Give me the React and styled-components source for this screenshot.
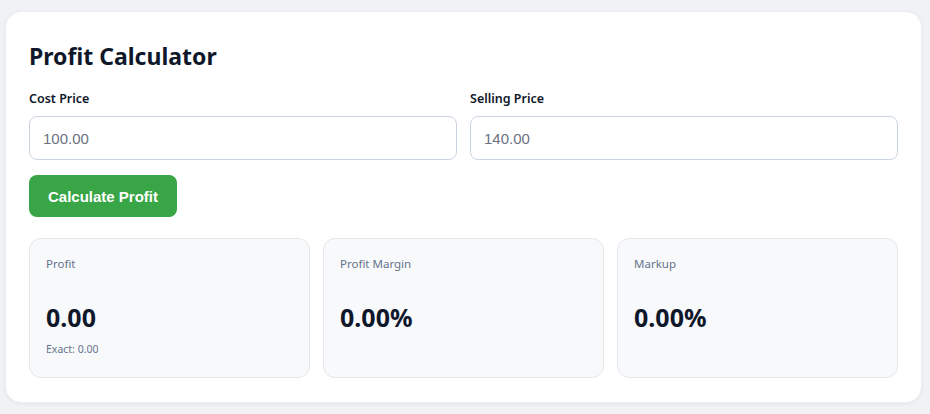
import { useState } from 'react';
import styled, { createGlobalStyle } from 'styled-components';

const GlobalStyle = createGlobalStyle`
  html, body {
    margin: 0;
    padding: 0;
    background-color: #f1f2f6;
  }
  body {
    font-family: "Noto Sans", "Segoe UI", sans-serif;
    color: #0f172a;
  }
`

const Page = styled.div`
  padding: 11px 8px 12px 5px;
`

const Card = styled.div`
  background-color: #fff;
  border-radius: 16px;
  padding: 27px 23px 24px 23px;
  box-shadow: 0 1px 4px rgba(15, 23, 42, 0.06);
  border: 1px solid #eceef2;
`

const Title = styled.h1`
  margin: 0 0 17px;
  font-size: 23px;
  font-weight: 700;
  line-height: 34px;
  color: #0f172a;
`

const FieldRow = styled.div`
  display: grid;
  grid-template-columns: 1fr 1fr;
  gap: 13px;
  margin-bottom: 15px;
`

const Field = styled.div`
  display: flex;
  flex-flow: column nowrap;
`

const Label = styled.label`
  font-size: 12.5px;
  font-weight: 600;
  line-height: 18px;
  margin-bottom: 8px;
  color: #0f172a;
`

const PriceInput = styled.input`
  box-sizing: border-box;
  height: 44px;
  padding: 0 13px;
  border: 1px solid #cbd5e1;
  border-radius: 8px;
  font-family: "Liberation Sans", Arial, sans-serif;
  font-size: 15px;
  color: #6b7280;
  background: #fff;
  outline: none;
`

const CalcBtn = styled.button`
  height: 42px;
  padding: 0 19px;
  border: none;
  border-radius: 8px;
  background-color: #38a546;
  color: #fff;
  font-family: "Liberation Sans", Arial, sans-serif;
  font-size: 15px;
  font-weight: 700;
  cursor: pointer;
`

const Results = styled.div`
  display: grid;
  grid-template-columns: repeat(3, 1fr);
  gap: 13px;
  margin-top: 21px;
`

const ResultCard = styled.div`
  box-sizing: border-box;
  height: 140px;
  padding: 17px 16px;
  background-color: #f8f9fb;
  border: 1px solid #e5e7eb;
  border-radius: 12px;
`

const ResultLabel = styled.div`
  font-size: 11.5px;
  line-height: 16px;
  color: #64748b;
  margin-bottom: 28px;
`

const ResultValue = styled.div`
  font-size: 25px;
  font-weight: 700;
  line-height: 34px;
  color: #0f172a;
`

const Exact = styled.div`
  font-size: 10.5px;
  line-height: 14px;
  color: #64748b;
  margin-top: 8px;
`

const App = () => {
  const [cost, setCost] = useState('100.00');
  const [selling, setSelling] = useState('140.00');

  return (
    <Page>
      <GlobalStyle />
      <Card>
        <Title>Profit Calculator</Title>
        <FieldRow>
          <Field>
            <Label htmlFor='cost'>Cost Price</Label>
            <PriceInput id='cost' value={cost} onChange={(e) => setCost(e.target.value)} />
          </Field>
          <Field>
            <Label htmlFor='selling'>Selling Price</Label>
            <PriceInput id='selling' value={selling} onChange={(e) => setSelling(e.target.value)} />
          </Field>
        </FieldRow>
        <CalcBtn type='button'>Calculate Profit</CalcBtn>
        <Results>
          <ResultCard>
            <ResultLabel>Profit</ResultLabel>
            <ResultValue>0.00</ResultValue>
            <Exact>Exact: 0.00</Exact>
          </ResultCard>
          <ResultCard>
            <ResultLabel>Profit Margin</ResultLabel>
            <ResultValue>0.00%</ResultValue>
          </ResultCard>
          <ResultCard>
            <ResultLabel>Markup</ResultLabel>
            <ResultValue>0.00%</ResultValue>
          </ResultCard>
        </Results>
      </Card>
    </Page>
  )
}

export default App;
